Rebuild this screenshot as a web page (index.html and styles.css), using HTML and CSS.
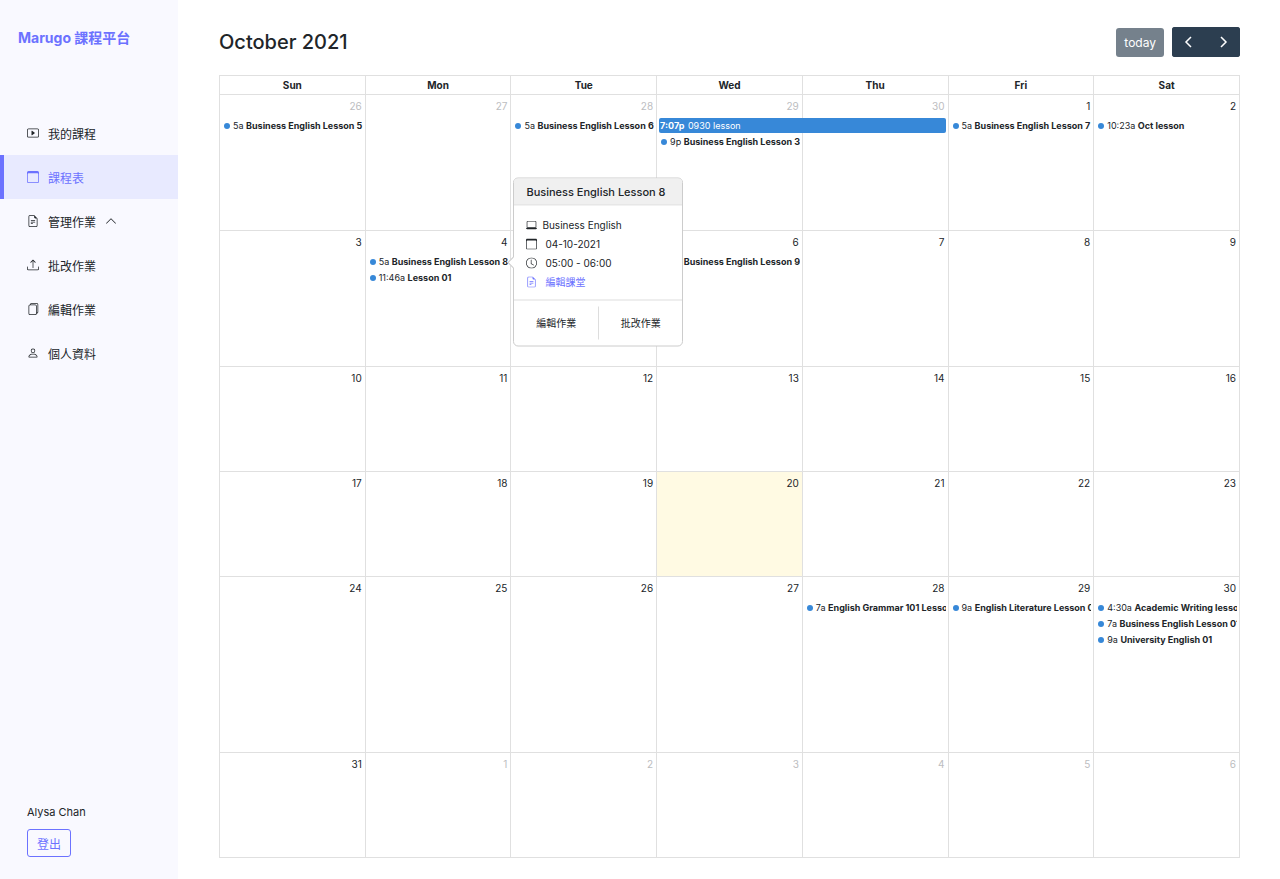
FILE: index.html
```html
<!DOCTYPE html>
<html lang="zh-Hant">
<head>
    <meta charset="UTF-8">
    <meta name="viewport" content="width=device-width, initial-scale=1.0">
    <title>Marugo 課程平台</title>
    <link rel="stylesheet" href="styles.css">
</head>
<body>
    <div class="layout">
        <aside class="sidebar">
            <a href="#" class="brand">Marugo 課程平台</a>
            <nav class="menu">
                <a href="#" class="menu-item">
                    <svg class="icon" viewBox="0 0 16 16"><path d="M6.79 5.093A.5.5 0 0 0 6 5.5v5a.5.5 0 0 0 .79.407l3.5-2.5a.5.5 0 0 0 0-.814l-3.5-2.5z"/><path d="M0 4a2 2 0 0 1 2-2h12a2 2 0 0 1 2 2v8a2 2 0 0 1-2 2H2a2 2 0 0 1-2-2V4zm15 0a1 1 0 0 0-1-1H2a1 1 0 0 0-1 1v8a1 1 0 0 0 1 1h12a1 1 0 0 0 1-1V4z"/></svg>
                    我的課程
                </a>
                <a href="#" class="menu-item active">
                    <svg class="icon" viewBox="0 0 16 16"><path d="M14 0H2a2 2 0 0 0-2 2v12a2 2 0 0 0 2 2h12a2 2 0 0 0 2-2V2a2 2 0 0 0-2-2zM1 3.857C1 3.384 1.448 3 2 3h12c.552 0 1 .384 1 .857v10.286c0 .473-.448.857-1 .857H2c-.552 0-1-.384-1-.857V3.857z"/></svg>
                    課程表
                </a>
                <a href="#" class="menu-item">
                    <svg class="icon" viewBox="0 0 16 16"><path d="M5.5 7a.5.5 0 0 0 0 1h5a.5.5 0 0 0 0-1h-5zM5 9.5a.5.5 0 0 1 .5-.5h5a.5.5 0 0 1 0 1h-5a.5.5 0 0 1-.5-.5zm0 2a.5.5 0 0 1 .5-.5h2a.5.5 0 0 1 0 1h-2a.5.5 0 0 1-.5-.5z"/><path d="M9.5 0H4a2 2 0 0 0-2 2v12a2 2 0 0 0 2 2h8a2 2 0 0 0 2-2V4.5L9.5 0zm0 1v2A1.5 1.5 0 0 0 11 4.5h2V14a1 1 0 0 1-1 1H4a1 1 0 0 1-1-1V2a1 1 0 0 1 1-1h5.5z"/></svg>
                    管理作業
                    <svg class="icon chevron" viewBox="0 0 16 16"><path d="M7.646 4.646a.5.5 0 0 1 .708 0l6 6a.5.5 0 0 1-.708.708L8 5.707l-5.646 5.647a.5.5 0 0 1-.708-.708l6-6z"/></svg>
                </a>
                <a href="#" class="menu-item">
                    <svg class="icon" viewBox="0 0 16 16"><path d="M.5 9.9a.5.5 0 0 1 .5.5v2.5a1 1 0 0 0 1 1h12a1 1 0 0 0 1-1v-2.5a.5.5 0 0 1 1 0v2.5a2 2 0 0 1-2 2H2a2 2 0 0 1-2-2v-2.5a.5.5 0 0 1 .5-.5z"/><path d="M7.646 1.146a.5.5 0 0 1 .708 0l3 3a.5.5 0 0 1-.708.708L8.5 2.707V11.5a.5.5 0 0 1-1 0V2.707L5.354 4.854a.5.5 0 1 1-.708-.708l3-3z"/></svg>
                    批改作業
                </a>
                <a href="#" class="menu-item">
                    <svg class="icon" viewBox="0 0 16 16"><path d="M13 0H6a2 2 0 0 0-2 2 2 2 0 0 0-2 2v10a2 2 0 0 0 2 2h7a2 2 0 0 0 2-2 2 2 0 0 0 2-2V2a2 2 0 0 0-2-2zm0 13V4a2 2 0 0 0-2-2H5a1 1 0 0 1 1-1h7a1 1 0 0 1 1 1v10a1 1 0 0 1-1 1zM3 4a1 1 0 0 1 1-1h7a1 1 0 0 1 1 1v10a1 1 0 0 1-1 1H4a1 1 0 0 1-1-1V4z"/></svg>
                    編輯作業
                </a>
                <a href="#" class="menu-item">
                    <svg class="icon" viewBox="0 0 16 16"><path d="M8 8a3 3 0 1 0 0-6 3 3 0 0 0 0 6zm2-3a2 2 0 1 1-4 0 2 2 0 0 1 4 0zm4 8c0 1-1 1-1 1H3s-1 0-1-1 1-4 6-4 6 3 6 4zm-1-.004c-.001-.246-.154-.986-.832-1.664C11.516 10.68 10.289 10 8 10c-2.29 0-3.516.68-4.168 1.332-.678.678-.83 1.418-.832 1.664h10z"/></svg>
                    個人資料
                </a>
            </nav>
            <div class="account">
                <span>Alysa Chan</span>
                <button type="button" class="btn-logout">登出</button>
            </div>
        </aside>

        <main class="content">
            <header class="toolbar">
                <h1 class="title">October 2021</h1>
                <button type="button" class="btn btn-today" disabled>today</button>
                <div class="btn-group">
                    <button type="button" class="btn" aria-label="prev">
                        <svg class="arrow" viewBox="0 0 12 12"><path d="M8 1 3 6l5 5"/></svg>
                    </button>
                    <button type="button" class="btn" aria-label="next">
                        <svg class="arrow" viewBox="0 0 12 12"><path d="m4 1 5 5-5 5"/></svg>
                    </button>
                </div>
            </header>

            <table class="calendar">
                <thead>
                    <tr>
                        <th>Sun</th>
                        <th>Mon</th>
                        <th>Tue</th>
                        <th>Wed</th>
                        <th>Thu</th>
                        <th>Fri</th>
                        <th>Sat</th>
                    </tr>
                </thead>
                <tbody>
                    <tr class="week-medium">
                        <td class="other"><span class="day">26</span>
                            <ul class="events">
                                <li><a href="#" class="event"><i class="dot"></i>5a <b>Business English Lesson 5</b></a></li>
                            </ul>
                        </td>
                        <td class="other"><span class="day">27</span></td>
                        <td class="other"><span class="day">28</span>
                            <ul class="events">
                                <li><a href="#" class="event"><i class="dot"></i>5a <b>Business English Lesson 6</b></a></li>
                            </ul>
                        </td>
                        <td class="other"><span class="day">29</span>
                            <ul class="events">
                                <li><a href="#" class="event-block"><b>7:07p</b> 0930 lesson</a></li>
                                <li><a href="#" class="event"><i class="dot"></i>9p <b>Business English Lesson 34</b></a></li>
                            </ul>
                        </td>
                        <td class="other"><span class="day">30</span></td>
                        <td><span class="day">1</span>
                            <ul class="events">
                                <li><a href="#" class="event"><i class="dot"></i>5a <b>Business English Lesson 7</b></a></li>
                            </ul>
                        </td>
                        <td><span class="day">2</span>
                            <ul class="events">
                                <li><a href="#" class="event"><i class="dot"></i>10:23a <b>Oct lesson</b></a></li>
                            </ul>
                        </td>
                    </tr>
                    <tr class="week-medium">
                        <td><span class="day">3</span></td>
                        <td><span class="day">4</span>
                            <ul class="events">
                                <li>
                                    <a href="#" class="event"><i class="dot"></i>5a <b>Business English Lesson 8</b></a>
                                    <div class="popover">
                                        <h2 class="popover-title">Business English Lesson 8</h2>
                                        <div class="popover-body">
                                            <div class="info info-course">
                                                <svg class="icon" viewBox="0 0 16 16"><path d="M13.5 3a.5.5 0 0 1 .5.5V11H2V3.5a.5.5 0 0 1 .5-.5h11zm-11-1A1.5 1.5 0 0 0 1 3.5V12h14V3.5A1.5 1.5 0 0 0 13.5 2h-11zM0 12.5h16a1.5 1.5 0 0 1-1.5 1.5h-13A1.5 1.5 0 0 1 0 12.5z"/></svg>
                                                Business English
                                            </div>
                                            <div class="info">
                                                <svg class="icon" viewBox="0 0 16 16"><path d="M14 0H2a2 2 0 0 0-2 2v12a2 2 0 0 0 2 2h12a2 2 0 0 0 2-2V2a2 2 0 0 0-2-2zM1 3.857C1 3.384 1.448 3 2 3h12c.552 0 1 .384 1 .857v10.286c0 .473-.448.857-1 .857H2c-.552 0-1-.384-1-.857V3.857z"/></svg>
                                                04-10-2021
                                            </div>
                                            <div class="info">
                                                <svg class="icon" viewBox="0 0 16 16"><path d="M8 3.5a.5.5 0 0 0-1 0V9a.5.5 0 0 0 .252.434l3.5 2a.5.5 0 0 0 .496-.868L8 8.71V3.5z"/><path d="M8 16A8 8 0 1 0 8 0a8 8 0 0 0 0 16zm7-8A7 7 0 1 1 1 8a7 7 0 0 1 14 0z"/></svg>
                                                05:00 - 06:00
                                            </div>
                                            <a href="#" class="info info-link">
                                                <svg class="icon" viewBox="0 0 16 16"><path d="M5.5 7a.5.5 0 0 0 0 1h5a.5.5 0 0 0 0-1h-5zM5 9.5a.5.5 0 0 1 .5-.5h5a.5.5 0 0 1 0 1h-5a.5.5 0 0 1-.5-.5zm0 2a.5.5 0 0 1 .5-.5h2a.5.5 0 0 1 0 1h-2a.5.5 0 0 1-.5-.5z"/><path d="M9.5 0H4a2 2 0 0 0-2 2v12a2 2 0 0 0 2 2h8a2 2 0 0 0 2-2V4.5L9.5 0zm0 1v2A1.5 1.5 0 0 0 11 4.5h2V14a1 1 0 0 1-1 1H4a1 1 0 0 1-1-1V2a1 1 0 0 1 1-1h5.5z"/></svg>
                                                編輯課堂
                                            </a>
                                        </div>
                                        <div class="popover-footer">
                                            <a href="#">編輯作業</a>
                                            <a href="#">批改作業</a>
                                        </div>
                                    </div>
                                </li>
                                <li><a href="#" class="event"><i class="dot"></i>11:46a <b>Lesson 01</b></a></li>
                            </ul>
                        </td>
                        <td><span class="day">5</span></td>
                        <td><span class="day">6</span>
                            <ul class="events">
                                <li><a href="#" class="event"><i class="dot"></i>9p <b>Business English Lesson 9</b></a></li>
                            </ul>
                        </td>
                        <td><span class="day">7</span></td>
                        <td><span class="day">8</span></td>
                        <td><span class="day">9</span></td>
                    </tr>
                    <tr>
                        <td><span class="day">10</span></td>
                        <td><span class="day">11</span></td>
                        <td><span class="day">12</span></td>
                        <td><span class="day">13</span></td>
                        <td><span class="day">14</span></td>
                        <td><span class="day">15</span></td>
                        <td><span class="day">16</span></td>
                    </tr>
                    <tr>
                        <td><span class="day">17</span></td>
                        <td><span class="day">18</span></td>
                        <td><span class="day">19</span></td>
                        <td class="today"><span class="day">20</span></td>
                        <td><span class="day">21</span></td>
                        <td><span class="day">22</span></td>
                        <td><span class="day">23</span></td>
                    </tr>
                    <tr class="week-tall">
                        <td><span class="day">24</span></td>
                        <td><span class="day">25</span></td>
                        <td><span class="day">26</span></td>
                        <td><span class="day">27</span></td>
                        <td><span class="day">28</span>
                            <ul class="events">
                                <li><a href="#" class="event"><i class="dot"></i>7a <b>English Grammar 101 Lesson</b></a></li>
                            </ul>
                        </td>
                        <td><span class="day">29</span>
                            <ul class="events">
                                <li><a href="#" class="event"><i class="dot"></i>9a <b>English Literature Lesson 01</b></a></li>
                            </ul>
                        </td>
                        <td><span class="day">30</span>
                            <ul class="events">
                                <li><a href="#" class="event"><i class="dot"></i>4:30a <b>Academic Writing lesson</b></a></li>
                                <li><a href="#" class="event"><i class="dot"></i>7a <b>Business English Lesson 01</b></a></li>
                                <li><a href="#" class="event"><i class="dot"></i>9a <b>University English 01</b></a></li>
                            </ul>
                        </td>
                    </tr>
                    <tr>
                        <td><span class="day">31</span></td>
                        <td class="other"><span class="day">1</span></td>
                        <td class="other"><span class="day">2</span></td>
                        <td class="other"><span class="day">3</span></td>
                        <td class="other"><span class="day">4</span></td>
                        <td class="other"><span class="day">5</span></td>
                        <td class="other"><span class="day">6</span></td>
                    </tr>
                </tbody>
            </table>
        </main>
    </div>
</body>
</html>
```
FILE: styles.css
```css
*,
*::after,
*::before {
    box-sizing: border-box;
}
body {
    margin: 0;
    font-family: Inter, "Noto Sans CJK TC", sans-serif;
    font-size: 12px;
    color: #212529;
    background: #fff;
}
a {
    color: inherit;
    text-decoration: none;
}
button {
    font-family: inherit;
    cursor: pointer;
}
.icon {
    width: 12px;
    height: 12px;
    flex-shrink: 0;
    fill: currentColor;
}
.layout {
    display: flex;
    min-height: 100vh;
}

/* sidebar */
.sidebar {
    display: flex;
    flex-direction: column;
    width: 178px;
    flex-shrink: 0;
    background: #f9f9ff;
}
.brand {
    padding: 26px 18px 0;
    font-size: 14px;
    line-height: 24px;
    font-weight: 700;
    color: #6c72ff;
}
.menu {
    margin-top: 61px;
}
.menu-item {
    display: flex;
    align-items: center;
    gap: 9px;
    height: 44px;
    padding-left: 23px;
    border-left: 4px solid transparent;
}
.menu-item.active {
    color: #6c72ff;
    background: #e8eaff;
    border-left-color: #6c72ff;
}
.account {
    display: flex;
    flex-direction: column;
    align-items: flex-start;
    gap: 8px;
    margin-top: auto;
    padding: 0 27px 22px;
    font-size: 11px;
    line-height: 18px;
}
.btn-logout {
    height: 28px;
    padding: 0 9px;
    font-size: 12px;
    color: #6c72ff;
    background: transparent;
    border: 1px solid #6c72ff;
    border-radius: 3px;
}

/* calendar toolbar */
.content {
    flex: 1;
    min-width: 0;
    padding: 27px 40px 20px 41px;
}
.toolbar {
    display: flex;
    align-items: center;
    margin-bottom: 18px;
}
.title {
    flex: 1;
    margin: 0;
    font-size: 20px;
    line-height: 30px;
    font-weight: 500;
}
.btn {
    display: flex;
    align-items: center;
    justify-content: center;
    height: 30px;
    padding: 0 11px;
    font-size: 12px;
    color: #fff;
    background: #2c3e50;
    border: none;
    border-radius: 3px;
}
.btn-today {
    height: 29px;
    padding: 0 8px;
    margin-right: 8px;
    opacity: 0.65;
}
.btn-group {
    display: flex;
    background: #2c3e50;
    border-radius: 3px;
}
.arrow {
    width: 12px;
    height: 12px;
    fill: none;
    stroke: #fff;
    stroke-width: 1.5;
}

/* calendar */
.calendar {
    width: 100%;
    table-layout: fixed;
    border-collapse: collapse;
}
.calendar th,
.calendar td {
    padding: 0;
    border: 1px solid #e0e0e0;
}
.calendar th {
    height: 19px;
    font-size: 10px;
    line-height: 18px;
    font-weight: 700;
}
.calendar td {
    height: 105px;
    vertical-align: top;
}
.calendar .week-medium td {
    height: 136px;
}
.calendar .week-tall td {
    height: 176px;
}
.calendar .today {
    background: #fffae3;
}
.day {
    display: block;
    padding-right: 3px;
    font-size: 10px;
    line-height: 23px;
    text-align: right;
}
.other .day {
    color: #bcbdbf;
}
.events {
    margin: 0;
    padding: 0 2px 0 4px;
    list-style: none;
}
.events li {
    position: relative;
    height: 16px;
}
.event {
    display: block;
    overflow: hidden;
    white-space: nowrap;
    font-size: 9px;
    line-height: 16px;
}
.dot {
    display: inline-block;
    width: 6px;
    height: 6px;
    margin-right: 3px;
    border-radius: 50%;
    background: #3788d8;
}
/* runs on over the next day */
.event-block {
    position: relative;
    z-index: 1;
    display: block;
    width: calc(200% + 9px);
    margin-left: -2px;
    padding-left: 1px;
    font-size: 9px;
    line-height: 15px;
    color: #fff;
    background: #3788d8;
    border-radius: 2px;
}
.event-block b {
    margin-right: 1px;
}

/* event popover */
.popover {
    position: absolute;
    z-index: 2;
    top: 50%;
    left: calc(100% + 5px);
    width: 170px;
    transform: translateY(-50%);
    background: #fff;
    border: 1px solid #ccc;
    border-radius: 5px;
}
.popover::before {
    content: "";
    position: absolute;
    top: 50%;
    left: -5px;
    width: 8px;
    height: 8px;
    margin-top: -4px;
    background: #fff;
    border-left: 1px solid #ccc;
    border-bottom: 1px solid #ccc;
    transform: rotate(45deg);
}
.popover-title {
    margin: 0;
    padding: 0 12px;
    font-size: 11px;
    line-height: 26px;
    font-weight: 500;
    white-space: nowrap;
    background: #f0f0f0;
    border-bottom: 1px solid #ccc;
    border-radius: 4px 4px 0 0;
}
.popover-body {
    padding: 10px 12px 8px;
}
.info {
    display: flex;
    align-items: center;
    gap: 8px;
    font-size: 10px;
    line-height: 19px;
}
.info .icon {
    width: 11px;
    height: 11px;
}
.info-course {
    gap: 5px;
}
.info-link {
    color: #6c72ff;
}
.popover-footer {
    display: flex;
    padding: 6px 0;
    border-top: 1px solid #ddd;
}
.popover-footer a {
    flex: 1;
    font-size: 10px;
    line-height: 33px;
    text-align: center;
}
.popover-footer a + a {
    border-left: 1px solid #ddd;
}
```
